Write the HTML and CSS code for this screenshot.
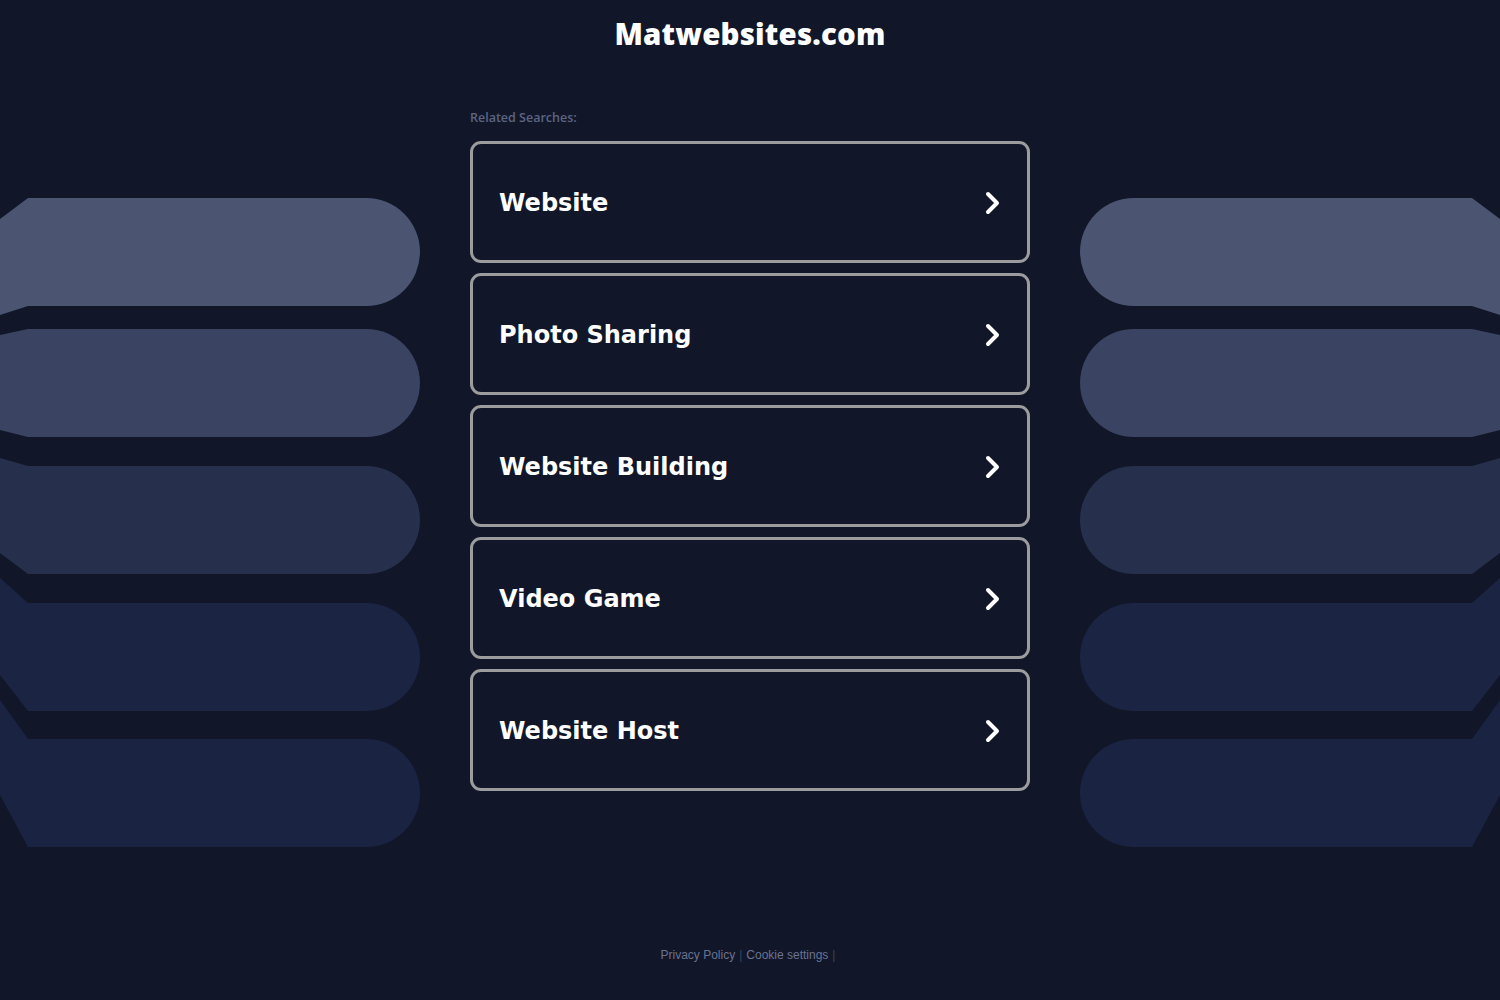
FILE: index.html
```html
<!DOCTYPE html>
<html lang="en">
<head>
<meta charset="utf-8">
<title>Matwebsites.com</title>
<link rel="stylesheet" href="styles.css">
</head>
<body>
<div class="deco deco-left" aria-hidden="true">
  <svg width="420" height="1000" viewBox="0 0 420 1000">
    <path fill="#4b5572" d="M0,219 L28,198 H366 A54,54 0 0 1 366,306 H28 L0,315 Z"/>
    <path fill="#3a4361" d="M0,335 L28,329 H366 A54,54 0 0 1 366,437 H28 L0,430 Z"/>
    <path fill="#262f4c" d="M0,458 L28,466 H366 A54,54 0 0 1 366,574 H28 L0,553 Z"/>
    <path fill="#1b2443" d="M0,578 L28,603 H366 A54,54 0 0 1 366,711 H28 L0,675 Z"/>
    <path fill="#1a2342" d="M0,700 L28,739 H366 A54,54 0 0 1 366,847 H28 L0,795 Z"/>
  </svg>
</div>
<div class="deco deco-right" aria-hidden="true">
  <svg width="420" height="1000" viewBox="0 0 420 1000">
    <path fill="#4b5572" d="M0,219 L28,198 H366 A54,54 0 0 1 366,306 H28 L0,315 Z"/>
    <path fill="#3a4361" d="M0,335 L28,329 H366 A54,54 0 0 1 366,437 H28 L0,430 Z"/>
    <path fill="#262f4c" d="M0,458 L28,466 H366 A54,54 0 0 1 366,574 H28 L0,553 Z"/>
    <path fill="#1b2443" d="M0,578 L28,603 H366 A54,54 0 0 1 366,711 H28 L0,675 Z"/>
    <path fill="#1a2342" d="M0,700 L28,739 H366 A54,54 0 0 1 366,847 H28 L0,795 Z"/>
  </svg>
</div>

<div class="page">
  <header class="site-header">
    <h1 class="site-title">Matwebsites.com</h1>
  </header>

  <main class="results">
    <p class="related-label">Related Searches:</p>
    <ul class="link-list">
      <li><a class="link-card" href="#"><span class="link-text">Website</span><svg class="chev" width="24" height="28" viewBox="0 0 24 28"><path d="M8 5 L17 14 L8 23" fill="none" stroke="#fff" stroke-width="4" stroke-linecap="round" stroke-linejoin="round"/></svg></a></li>
      <li><a class="link-card" href="#"><span class="link-text">Photo Sharing</span><svg class="chev" width="24" height="28" viewBox="0 0 24 28"><path d="M8 5 L17 14 L8 23" fill="none" stroke="#fff" stroke-width="4" stroke-linecap="round" stroke-linejoin="round"/></svg></a></li>
      <li><a class="link-card" href="#"><span class="link-text">Website Building</span><svg class="chev" width="24" height="28" viewBox="0 0 24 28"><path d="M8 5 L17 14 L8 23" fill="none" stroke="#fff" stroke-width="4" stroke-linecap="round" stroke-linejoin="round"/></svg></a></li>
      <li><a class="link-card" href="#"><span class="link-text">Video Game</span><svg class="chev" width="24" height="28" viewBox="0 0 24 28"><path d="M8 5 L17 14 L8 23" fill="none" stroke="#fff" stroke-width="4" stroke-linecap="round" stroke-linejoin="round"/></svg></a></li>
      <li><a class="link-card" href="#"><span class="link-text">Website Host</span><svg class="chev" width="24" height="28" viewBox="0 0 24 28"><path d="M8 5 L17 14 L8 23" fill="none" stroke="#fff" stroke-width="4" stroke-linecap="round" stroke-linejoin="round"/></svg></a></li>
    </ul>
  </main>

  <footer class="site-footer">
    <a href="#">Privacy Policy</a><span class="sep">|</span><a href="#">Cookie settings</a><span class="sep">|</span>
  </footer>
</div>
</body>
</html>
```
FILE: styles.css
```css
html, body {
  margin: 0;
  padding: 0;
}
body {
  background: #111729;
  width: 1500px;
  height: 1000px;
  overflow: hidden;
  position: relative;
  font-family: "Liberation Sans", Arial, sans-serif;
}
.deco {
  position: absolute;
  top: 0;
  width: 420px;
  height: 1000px;
  z-index: 0;
}
.deco svg { display: block; }
.deco-left { left: 0; }
.deco-right { right: 0; transform: scaleX(-1); }

.page {
  position: relative;
  z-index: 1;
  height: 1000px;
  display: flex;
  flex-direction: column;
  align-items: center;
}
.site-header {
  padding-top: 14px;
  height: 109px;
  box-sizing: border-box;
}
.site-title {
  margin: 0;
  font-family: "Open Sans", sans-serif;
  font-weight: 800;
  font-size: 29.4px;
  line-height: 40px;
  color: #ffffff;
  letter-spacing: 0.2px;
}
.results {
  width: 560px;
}
.related-label {
  margin: 0 0 15px 0;
  font-family: "Open Sans", sans-serif;
  font-size: 12.5px;
  line-height: 17px;
  font-weight: 600;
  color: #5c6482;
}
.link-list {
  list-style: none;
  margin: 0;
  padding: 0;
  display: flex;
  flex-direction: column;
  gap: 10px;
}
.link-card {
  display: flex;
  align-items: center;
  justify-content: space-between;
  height: 122px;
  box-sizing: border-box;
  border: 3px solid #9c9c9f;
  border-radius: 11px;
  padding: 2px 23px 0 26px;
  background: #111729;
  text-decoration: none;
}
.link-text {
  font-family: "DejaVu Sans", Verdana, sans-serif;
  font-weight: 700;
  font-size: 24px;
  color: #ffffff;
}
.chev { display: block; }

.site-footer {
  margin-top: auto;
  margin-bottom: 38px;
  font-size: 12px;
  line-height: 14px;
  color: #6a7292;
}
.site-footer a {
  color: #6a7292;
  text-decoration: none;
}
.sep {
  color: #3a4260;
  margin: 0 4px;
}
```
